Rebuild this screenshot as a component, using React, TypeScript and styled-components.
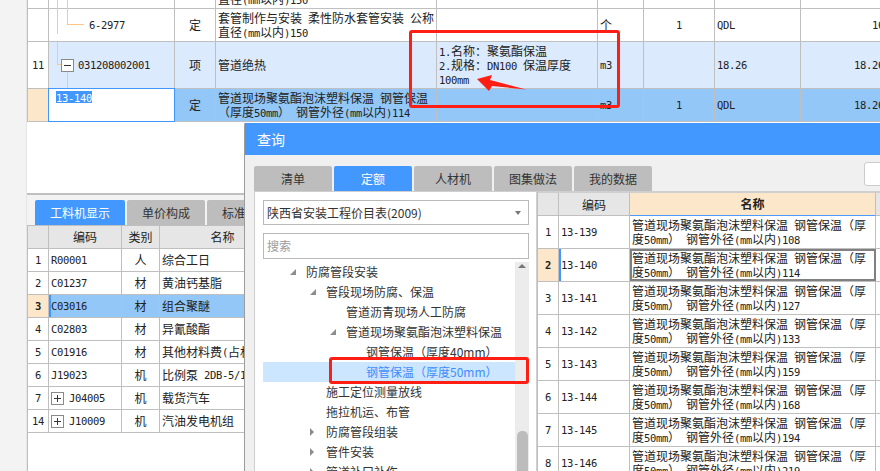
import React from "react";
import styled, { createGlobalStyle } from "styled-components";

const Global = createGlobalStyle`
  html, body { margin: 0; padding: 0; overflow: hidden; background: #f3f3f3; }
  * { box-sizing: border-box; }
`;

const CJK = `"Noto Sans CJK SC", "Noto Sans", sans-serif`;
const LINE = "#bfbfbf";
const PEACH = "#fde7cb";
const BLUE = "#4298ff";
const SELECT = "#92c7f7";

const Page = styled.div`
  position: relative;
  width: 880px;
  height: 471px;
  overflow: hidden;
  display: flex;
  background: #f3f3f3;
  font: 12px/14px ${CJK};
  color: #222;
`;
const Strip = styled.div`
  width: 27px;
  flex: none;
  border-right: 1px solid #e6e6e6;
`;
const Main = styled.div`
  flex: 1;
  min-width: 0;
  display: flex;
  flex-direction: column;
`;
const TopPane = styled.div`
  height: 195px;
  flex: none;
  background: #fff;
  border-bottom: 2px solid #c0c0c0;
  overflow: hidden;
`;
const TopGrid = styled.div`
  margin-top: -25px;
  width: 860px;
  border-left: 1px solid ${LINE};
`;
const GridRow = styled.div<{ $cols: string; $h: number; $bg?: string }>`
  display: grid;
  grid-template-columns: ${(p) => p.$cols};
  height: ${(p) => p.$h}px;
  background: ${(p) => p.$bg ?? "transparent"};
  border-bottom: 1px solid ${LINE};
`;
const Cell = styled.div<{ $align?: string; $bg?: string; $pad?: number; $bold?: boolean; $top?: boolean }>`
  position: relative;
  display: flex;
  align-items: ${(p) => (p.$top ? "flex-start" : "center")};
  justify-content: ${(p) => p.$align ?? "flex-start"};
  padding: 0 ${(p) => p.$pad ?? 2}px;
  border-right: 1px solid ${LINE};
  background: ${(p) => p.$bg ?? "transparent"};
  font-weight: ${(p) => (p.$bold ? 700 : 400)};
  white-space: nowrap;
  min-width: 0;
  overflow: hidden;
`;
const Lat = styled.span`
  font-family: "DejaVu Sans Mono", "Liberation Mono", monospace;
  font-size: 10.5px;
  letter-spacing: -0.32px;
  line-height: 1;
  white-space: pre;
`;
const Stack = styled.div`
  display: flex;
  flex-direction: column;
`;
const Line = styled.div`
  height: 14px;
  line-height: 14px;
`;
const EditCell = styled.div`
  border: 1.5px solid #3f97ff;
  background: #fff;
  padding: 1px 7px;
  margin: -1px 0 -1px -1px;
  z-index: 1;
`;
const Selected = styled.span`
  display: inline-block;
  height: 12px;
  line-height: 12px;
  background: #3f97ff;
  color: #fff;
`;
const Guide = styled.i<{ $x: number; $y: number; $w: number; $h: number }>`
  position: absolute;
  left: ${(p) => p.$x}px;
  top: ${(p) => p.$y}px;
  width: ${(p) => p.$w}px;
  height: ${(p) => p.$h}px;
  background: #ffc780;
`;
const TreeBox = styled.span<{ $mr: number }>`
  position: relative;
  flex: none;
  width: 13px;
  height: 13px;
  margin-right: ${(p) => p.$mr}px;
  border: 1px solid #8a8a8a;
  background: #fff;
  &::before {
    content: "";
    position: absolute;
    left: 2px;
    right: 2px;
    top: 5px;
    height: 1px;
    background: #333;
  }
`;
const PlusBox = styled(TreeBox)`
  &::after {
    content: "";
    position: absolute;
    top: 2px;
    bottom: 2px;
    left: 5px;
    width: 1px;
    background: #333;
  }
`;
const Splitless = styled.div`
  flex: 1;
  display: flex;
  flex-direction: column;
  min-height: 0;
`;
const BottomTabs = styled.div`
  display: flex;
  gap: 2px;
  height: 30px;
  padding: 5px 0 0 8px;
  flex: none;
`;
const Tab = styled.div<{ $active?: boolean; $w: number }>`
  width: ${(p) => p.$w}px;
  height: 25px;
  flex: none;
  display: flex;
  align-items: center;
  justify-content: center;
  border-radius: 2px 2px 0 0;
  background: ${(p) => (p.$active ? BLUE : "#bdbdbd")};
  color: ${(p) => (p.$active ? "#fff" : "#333")};
`;
const BottomGrid = styled.div`
  flex: 1;
  width: 218px;
  background: #fff;
  border-left: 1px solid ${LINE};
  border-top: 1px solid ${LINE};
  overflow: hidden;
`;
const Dialog = styled.div`
  position: absolute;
  left: 244px;
  top: 122px;
  width: 700px;
  height: 400px;
  background: #f0f0f0;
  border-left: 1px solid #9c9c9c;
  border-top: 1px solid #fff;
  border-radius: 3px 0 0 0;
  display: flex;
  flex-direction: column;
`;
const Title = styled.div`
  height: 32px;
  flex: none;
  display: flex;
  align-items: center;
  padding-left: 12px;
  background: ${BLUE};
  color: #fff;
  font-size: 14px;
`;
const DialogTabs = styled.div`
  height: 36px;
  flex: none;
  display: flex;
  align-items: flex-end;
  gap: 2px;
  padding-left: 9px;
`;
const MiniInput = styled.div`
  align-self: flex-start;
  margin: 7px 0 0 210px;
  width: 40px;
  height: 24px;
  background: #fff;
  border: 1px solid #ccc;
  border-radius: 3px;
`;
const DialogBody = styled.div`
  flex: 1;
  display: flex;
  padding-left: 9px;
  min-height: 0;
`;
const LeftPanel = styled.div`
  width: 283px;
  flex: none;
  background: #fff;
  border: 1px solid #cfcfcf;
  border-bottom: 0;
  padding: 8px 7px 0 8px;
  display: flex;
  flex-direction: column;
`;
const Select = styled.div`
  height: 25px;
  flex: none;
  display: flex;
  align-items: center;
  justify-content: space-between;
  padding: 0 7px 0 3px;
  border: 1px solid #b9b9b9;
  color: #333;
`;
const Caret = styled.span`
  width: 0;
  height: 0;
  border: 3.5px solid transparent;
  border-top: 4px solid #777;
  border-bottom: 0;
`;
const Search = styled.div`
  height: 26px;
  flex: none;
  margin-top: 8px;
  display: flex;
  align-items: center;
  padding-left: 3px;
  border: 1px solid #b9b9b9;
  color: #9b9b9b;
`;
const TreeWrap = styled.div`
  margin-top: 3px;
  flex: 1;
  display: flex;
  min-height: 0;
`;
const Tree = styled.div`
  flex: 1;
  min-width: 0;
`;
const TreeRow = styled.div<{ $level: number; $sel?: boolean }>`
  position: relative;
  height: 20px;
  display: flex;
  align-items: center;
  padding-left: ${(p) => 43 + p.$level * 20}px;
  background: ${(p) => (p.$sel ? "#cde6ff" : "transparent")};
  color: ${(p) => (p.$sel ? "#3f8cff" : "#333")};
  white-space: nowrap;
`;
const Expanded = styled.span`
  position: absolute;
  margin-left: -16px;
  width: 0;
  height: 0;
  border-style: solid;
  border-width: 0 0 6px 6px;
  border-color: transparent transparent #8c8c8c transparent;
`;
const Collapsed = styled.span`
  position: absolute;
  margin-left: -16px;
  width: 0;
  height: 0;
  border-style: solid;
  border-width: 4px 0 4px 4px;
  border-color: transparent transparent transparent #8c8c8c;
`;
const Scroll = styled.div`
  position: relative;
  width: 14px;
  flex: none;
  background: #ececec;
`;
const ScrollUp = styled.span`
  position: absolute;
  left: 3px;
  top: 2px;
  width: 0;
  height: 0;
  border: 4px solid transparent;
  border-bottom: 4px solid #777;
  border-top: 0;
`;
const Thumb = styled.span`
  position: absolute;
  left: 2px;
  right: 1px;
  top: 169px;
  height: 80px;
  border-radius: 5px;
  background: #bcbcbc;
`;
const RightGrid = styled.div`
  flex: 1;
  background: #fff;
  border-left: 1px solid ${LINE};
  border-top: 2px solid #cfcfcf;
  overflow: hidden;
`;
const NameCell = styled(Cell)<{ $focus?: boolean }>`
  outline: ${(p) => (p.$focus ? "2px solid #808080" : "none")};
  outline-offset: -2px;
  padding-left: 2px;
`;
const HeadName = styled(Cell)`
  border-bottom: 1px solid #4a9bff;
  height: 23px;
`;
const BlueEdge = styled(Cell)`
  box-shadow: inset 2px 0 0 #3f97ff;
`;
const RedBox = styled.div<{ $x: number; $y: number; $w: number; $h: number }>`
  position: absolute;
  left: ${(p) => p.$x}px;
  top: ${(p) => p.$y}px;
  width: ${(p) => p.$w}px;
  height: ${(p) => p.$h}px;
  border: 3px solid #ff1e14;
  border-radius: 3px;
`;
const ArrowSvg = styled.svg`
  position: absolute;
  left: 470px;
  top: 70px;
`;

const Txt = ({ s }: { s: string }) => (
  <>
    {s.split(/([\x00-\x7f]+)/).map((part, i) =>
      i % 2 ? <Lat key={i}>{part}</Lat> : part
    )}
  </>
);
const Lines = ({ lines }: { lines: string[] }) => (
  <Stack>
    {lines.map((l) => (
      <Line key={l}>
        <Txt s={l} />
      </Line>
    ))}
  </Stack>
);

const topCols = "21px 126px 41px 221px 161px 46px 71px 86px 86px";
const lowCols = "21px 73px 38px 126px";
const rightCols = "21px 71px 246px 60px";

const lowRows: [string, string, string, string, boolean?][] = [
  ["1", "R00001", "人", "综合工日"],
  ["2", "C01237", "材", "黄油钙基脂"],
  ["3", "C03016", "材", "组合聚醚"],
  ["4", "C02803", "材", "异氰酸酯"],
  ["5", "C01916", "材", "其他材料费(占材料费)"],
  ["6", "J19023", "机", "比例泵 2DB-5/1.6"],
  ["7", "J04005", "机", "载货汽车", true],
  ["14", "J10009", "机", "汽油发电机组", true],
];
const tree: [string, number, ("open" | "closed")?, boolean?][] = [
  ["防腐管段安装", 0, "open"],
  ["管段现场防腐、保温", 1, "open"],
  ["管道沥青现场人工防腐", 2],
  ["管道现场聚氨酯泡沫塑料保温", 2, "open"],
  ["钢管保温（厚度40mm）", 3],
  ["钢管保温（厚度50mm）", 3, undefined, true],
  ["施工定位测量放线", 1],
  ["拖拉机运、布管", 1],
  ["防腐管段组装", 1, "closed"],
  ["管件安装", 1, "closed"],
  ["管道补口补伤", 1, "closed"],
];
const rightRows = [
  ["13-139", "108"],
  ["13-140", "114"],
  ["13-141", "127"],
  ["13-142", "133"],
  ["13-143", "159"],
  ["13-144", "168"],
  ["13-145", "194"],
  ["13-146", "219"],
];

export default function App() {
  return (
    <Page>
      <Global />
      <Strip />
      <Main>
        <TopPane>
          <TopGrid>
            <GridRow $cols={topCols} $h={34}>
              <Cell />
              <Cell />
              <Cell />
              <Cell>
                <Lines lines={["套管制作与安装 柔性防水套管安装 公称", "直径(mm以内)150"]} />
              </Cell>
              <Cell /><Cell /><Cell /><Cell /><Cell />
            </GridRow>
            <GridRow $cols={topCols} $h={33}>
              <Cell />
              <Cell style={{ paddingLeft: 40, overflow: "visible" }}>
                <Guide $x={8} $y={-9} $w={1} $h={34} />
                <Guide $x={18} $y={-9} $w={1} $h={24} />
                <Guide $x={18} $y={15} $w={17} $h={1} />
                <Txt s="6-2977" />
              </Cell>
              <Cell $align="center">定</Cell>
              <Cell>
                <Lines lines={["套管制作与安装 柔性防水套管安装 公称", "直径(mm以内)150"]} />
              </Cell>
              <Cell />
              <Cell>个</Cell>
              <Cell $align="center"><Txt s="1" /></Cell>
              <Cell><Txt s="QDL" /></Cell>
              <Cell $align="flex-end"><Txt s="16" /></Cell>
            </GridRow>
            <GridRow $cols={topCols} $h={47} $bg="#dceafd">
              <Cell $align="center" $bg="#fff"><Txt s="11" /></Cell>
              <Cell style={{ paddingLeft: 12 }}>
                <Guide $x={8} $y={0} $w={1} $h={23} />
                <Guide $x={8} $y={22} $w={5} $h={1} />
                <Guide $x={18} $y={30} $w={1} $h={17} />
                <TreeBox $mr={4} />
                <Txt s="031208002001" />
              </Cell>
              <Cell $align="center">项</Cell>
              <Cell>管道绝热</Cell>
              <Cell>
                <Lines lines={["1.名称：聚氨酯保温", "2.规格：DN100 保温厚度", "100mm"]} />
              </Cell>
              <Cell><Txt s="m3" /></Cell>
              <Cell />
              <Cell><Txt s="18.26" /></Cell>
              <Cell $align="flex-end"><Txt s="18.26" /></Cell>
            </GridRow>
            <GridRow $cols={topCols} $h={33} $bg={SELECT}>
              <Cell $bg={PEACH} />
              <EditCell>
                <Selected><Txt s="13-140" /></Selected>
              </EditCell>
              <Cell $align="center">定</Cell>
              <Cell>
                <Lines lines={["管道现场聚氨酯泡沫塑料保温 钢管保温", "（厚度50mm） 钢管外径(mm以内)114"]} />
              </Cell>
              <Cell />
              <Cell><Txt s="m3" /></Cell>
              <Cell $align="center"><Txt s="1" /></Cell>
              <Cell><Txt s="QDL" /></Cell>
              <Cell $align="flex-end"><Txt s="18.26" /></Cell>
            </GridRow>
          </TopGrid>
        </TopPane>
        <Splitless>
          <BottomTabs>
            <Tab $active $w={90}>工料机显示</Tab>
            <Tab $w={78}>单价构成</Tab>
            <Tab $w={78}>标准换算</Tab>
          </BottomTabs>
          <BottomGrid>
            <GridRow $cols={lowCols} $h={23} $bg="#e6e6e6">
              <Cell />
              <Cell $align="center">编码</Cell>
              <Cell $align="center">类别</Cell>
              <Cell $align="center">名称</Cell>
            </GridRow>
            {lowRows.map(([n, code, kind, name, plus]) => {
              const sel = n === "3";
              const CodeCell = sel ? BlueEdge : Cell;
              return (
                <GridRow key={n} $cols={lowCols} $h={23} $bg={sel ? SELECT : undefined}>
                  <Cell $align="center" $bg={sel ? PEACH : undefined} $bold={sel}><Txt s={n} /></Cell>
                  <CodeCell>
                    {plus && <PlusBox $mr={5} />}
                    <Txt s={code} />
                  </CodeCell>
                  <Cell $align="center">{kind}</Cell>
                  <Cell><Txt s={name} /></Cell>
                </GridRow>
              );
            })}
          </BottomGrid>
        </Splitless>
      </Main>

      <Dialog>
        <Title>查询</Title>
        <DialogTabs>
          <Tab $w={78}>清单</Tab>
          <Tab $w={78} $active>定额</Tab>
          <Tab $w={78}>人材机</Tab>
          <Tab $w={78}>图集做法</Tab>
          <Tab $w={78}>我的数据</Tab>
          <MiniInput />
        </DialogTabs>
        <DialogBody>
          <LeftPanel>
            <Select>
              陕西省安装工程价目表(2009)
              <Caret />
            </Select>
            <Search>搜索</Search>
            <TreeWrap>
              <Tree>
                {tree.map(([label, level, arrow, sel]) => (
                  <TreeRow key={label} $level={level} $sel={sel}>
                    {arrow === "open" && <Expanded />}
                    {arrow === "closed" && <Collapsed />}
                    {label}
                  </TreeRow>
                ))}
              </Tree>
              <Scroll>
                <ScrollUp />
                <Thumb />
              </Scroll>
            </TreeWrap>
          </LeftPanel>
          <RightGrid>
            <GridRow $cols={rightCols} $h={23} $bg="#e6e6e6">
              <Cell />
              <Cell $align="center">编码</Cell>
              <HeadName $align="center" $bg={PEACH} $bold>名称</HeadName>
              <Cell />
            </GridRow>
            {rightRows.map(([code, tail], i) => {
              const sel = i === 1;
              const CodeCell = sel ? BlueEdge : Cell;
              return (
                <GridRow key={code} $cols={rightCols} $h={33}>
                  <Cell $align="center" $bg={sel ? PEACH : undefined} $bold={sel}><Txt s={String(i + 1)} /></Cell>
                  <CodeCell><Txt s={code} /></CodeCell>
                  <NameCell $focus={sel}>
                    <Lines lines={["管道现场聚氨酯泡沫塑料保温 钢管保温（厚", `度50mm） 钢管外径(mm以内)${tail}`]} />
                  </NameCell>
                  <Cell />
                </GridRow>
              );
            })}
          </RightGrid>
        </DialogBody>
      </Dialog>

      <RedBox $x={409} $y={30} $w={211} $h={78} />
      <RedBox $x={329} $y={357} $w={200} $h={27} />
      <ArrowSvg width="60" height="26" viewBox="0 0 60 26">
        <polygon points="7,9 22,5 20,10 56,19.5 22,16 19,21" fill="#ff1e14" />
      </ArrowSvg>
    </Page>
  );
}
